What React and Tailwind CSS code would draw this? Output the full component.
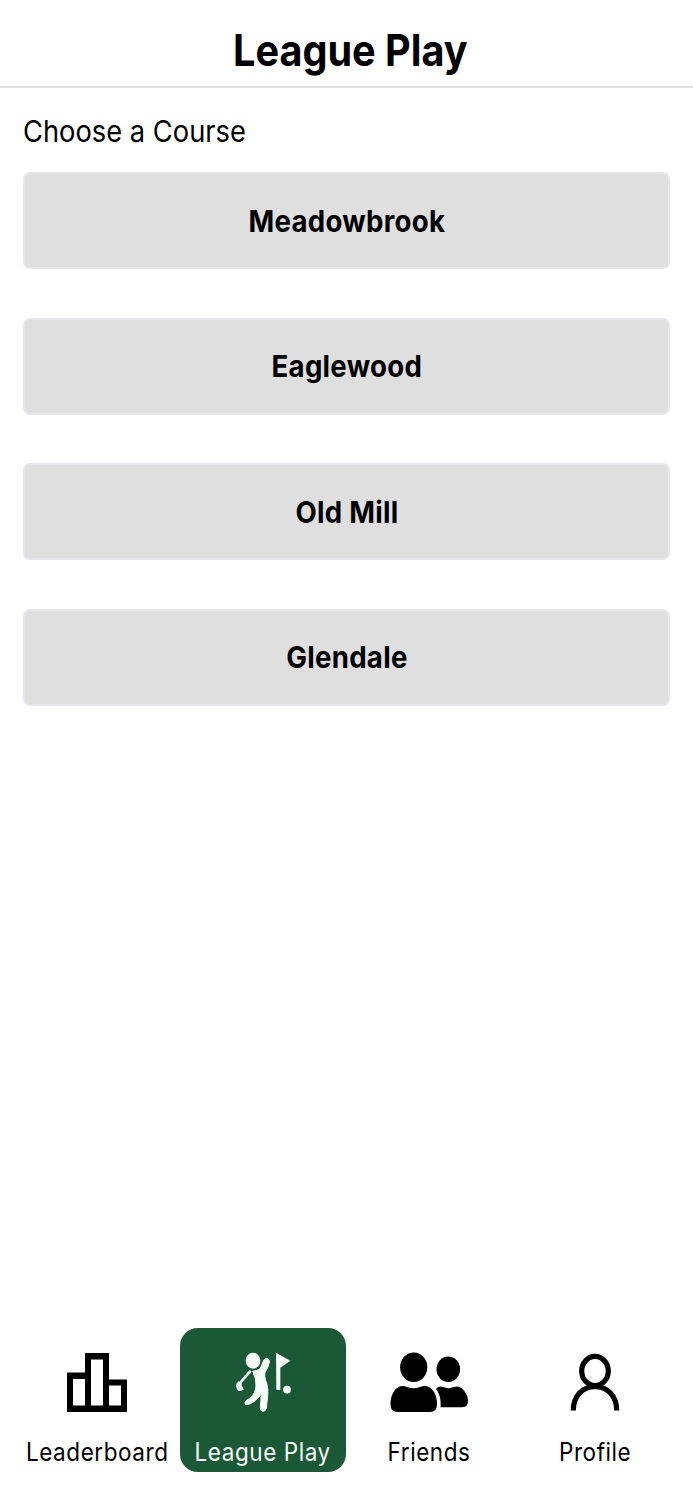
import { useState } from 'react';

const courses = ['Meadowbrook', 'Eaglewood', 'Old Mill', 'Glendale'];

function LeaderboardIcon() {
    return (
        <svg viewBox="0 0 80 64" className="h-16 w-20" fill="currentColor">
            <path
                fillRule="evenodd"
                d="M10 22.5H28V3H52V29.5H70V62H10ZM16 29V55.5H28V29ZM34 9.5V55.5H46V9.5ZM52 35.5V55.5H64V35.5Z"
            />
        </svg>
    );
}

function GolferIcon() {
    return (
        <svg viewBox="0 0 270 192" className="mr-1.5 h-16 w-[90px]" fill="currentColor">
            <ellipse cx="114" cy="32" rx="22" ry="24" />
            <path d="M107 62 75 99" fill="none" stroke="currentColor" strokeWidth="8" />
            <path d="M70 94Q64 98 63 106Q64 118 70 123Q78 124 86 119L83 110Q79 110 80 99Z" />
            <path
                stroke="currentColor"
                strokeWidth="3"
                strokeLinejoin="round"
                d="M113 64Q125 63 134 57Q139 50 143 38Q146 26 155 25Q165 27 163 37Q161 49 154 60Q148 69 149 79Q151 91 156 103Q160 120 158 137L154 174Q152 184 144 184Q135 183 136 173L139 132Q129 146 114 157Q104 164 93 164Q89 162 90 157Q92 151 101 147Q115 139 119 126Q123 116 123 105Q124 86 113 64Z"
            />
            <path d="M183 8 226 32 196 53V120H184Z" />
            <circle cx="216" cy="119" r="11.5" />
        </svg>
    );
}

function FriendsIcon() {
    return (
        <svg viewBox="0 0 80 64" className="h-16 w-20" fill="currentColor">
            <ellipse cx="24.7" cy="17.3" rx="13.6" ry="14.8" />
            <ellipse cx="59.3" cy="19.3" rx="11.8" ry="12.7" />
            <path d="M10.5 36.5Q14 35.2 18 37Q24.5 39.5 31 37Q35 35.2 39 36.5C45 39 48 46.5 48 54Q48 62 41 62H8.5Q1.5 62 1.5 54C1.5 46.5 4.5 39 10.5 36.5Z" />
            <path d="M47 39Q49.5 35.5 54 37Q59.5 39.3 65 37Q69 35.5 72.5 38C76.5 41.5 79 46.5 79 50.5Q79 57.3 73 57.3H51.6C52.2 49.5 50.5 43.5 47 39Z" />
        </svg>
    );
}

function ProfileIcon() {
    return (
        <svg viewBox="0 0 80 64" className="h-16 w-20" fill="none" stroke="currentColor" strokeWidth="5.2">
            <ellipse cx="40" cy="21" rx="13.3" ry="14.6" />
            <path d="M18.3 60.6C18.3 46.5 27 36.6 40 36.6S61.7 46.5 61.7 60.6" />
        </svg>
    );
}

const tabs = [
    { name: 'Leaderboard', icon: LeaderboardIcon },
    { name: 'League Play', icon: GolferIcon },
    { name: 'Friends', icon: FriendsIcon },
    { name: 'Profile', icon: ProfileIcon },
];

export default function App() {
    const [activeTab, setActiveTab] = useState('League Play');

    return (
        <div className="flex h-[1500px] w-full flex-col bg-white font-['Inter','Liberation_Sans',sans-serif] text-black">
            {/* Header */}
            <header className="flex h-[88px] shrink-0 items-center justify-center border-b-2 border-[#e2e2e2] pt-[14px] pl-[7px]">
                <h1 className="scale-x-[0.9] text-[44px] leading-none font-bold whitespace-nowrap">League Play</h1>
            </header>

            {/* Course list */}
            <main className="flex-1 px-[23px] pt-[25px]">
                <h2 className="h-[59.4px] w-max origin-left scale-x-[0.91] text-[30px] leading-9 whitespace-nowrap">Choose a Course</h2>
                <div className="flex flex-col gap-[48.4px]">
                    {courses.map((course) => (
                        <button
                            key={course}
                            className="flex h-[97px] w-full items-center justify-center rounded-[7px] border-2 border-[#e6e6ee] bg-[#dfdfdf] pt-px text-[30px] font-bold"
                        >
                            <span className="scale-x-[0.92] tracking-[0.01em] whitespace-nowrap">{course}</span>
                        </button>
                    ))}
                </div>
            </main>

            {/* Bottom tabs */}
            <nav className="mb-7 flex shrink-0 px-[14px]">
                {tabs.map((tab) => (
                    <button
                        key={tab.name}
                        onClick={() => setActiveTab(tab.name)}
                        className={`flex h-36 w-[166px] shrink-0 flex-col items-center rounded-[18px] pt-[22px] ${
                            activeTab === tab.name ? 'bg-[#1b5836] text-[#f6fcf8]' : ''
                        }`}
                    >
                        <tab.icon />
                        <span className="mt-[22px] scale-x-[0.9] text-[25px] leading-8 tracking-[0.025em] whitespace-nowrap">{tab.name}</span>
                    </button>
                ))}
            </nav>
        </div>
    );
}
